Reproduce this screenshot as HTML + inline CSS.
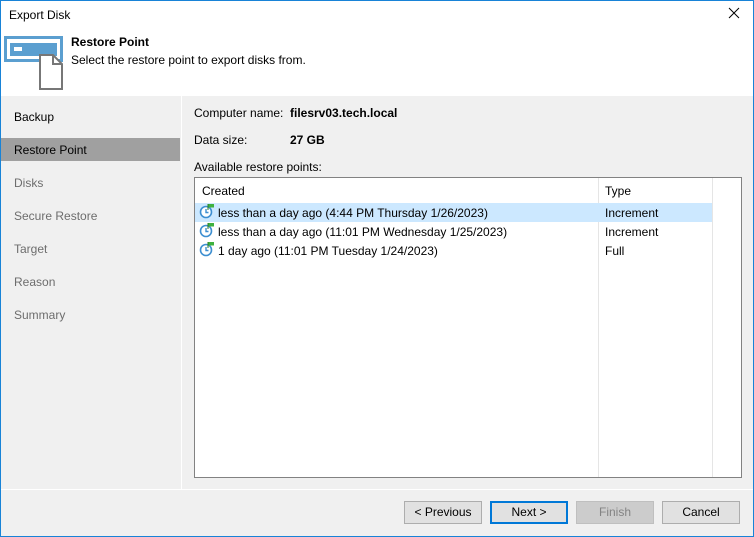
<!DOCTYPE html>
<html><head><meta charset="utf-8"><style>
*{margin:0;padding:0;box-sizing:border-box}
body{width:754px;height:537px;overflow:hidden;font-family:"Liberation Sans",sans-serif;font-size:12px;color:#000;background:#f0f0f0;position:relative}
.abs{position:absolute}
.win{position:absolute;left:0;top:0;width:754px;height:537px;border:1px solid #1883d7;border-top:none}
.nav{color:#6d6d6d;left:14px}
.btn{position:absolute;top:501px;height:23px;border:1px solid #adadad;background:#e1e1e1;text-align:center;line-height:21px}
</style></head><body>
<div class="abs" style="left:0;top:0;width:754px;height:96px;background:#fff"></div>
<div class="abs" style="left:0;top:0;width:754px;height:1px;background:#1883d7"></div>
<div class="abs" style="left:9px;top:8px;font-size:12px">Export Disk</div>
<svg class="abs" style="left:727px;top:6px" width="14" height="14"><path d="M2 2L12 12M12 2L2 12" stroke="#000" stroke-width="1"/></svg>
<svg class="abs" style="left:4px;top:36px" width="60" height="54">
<rect x="1.5" y="1.5" width="56" height="23" fill="none" stroke="#5b9fd0" stroke-width="3"/>
<rect x="6" y="7" width="47" height="13" fill="#5b9fd0"/>
<rect x="10" y="11" width="8" height="4" fill="#fff"/>
<path d="M36 19H49L58 28V53H36Z" fill="#fff" stroke="#777" stroke-width="2"/>
<path d="M49 19V28H58" fill="none" stroke="#777" stroke-width="2"/>
</svg>
<div class="abs" style="left:71px;top:35px;font-weight:bold">Restore Point</div>
<div class="abs" style="left:71px;top:53px">Select the restore point to export disks from.</div>
<div class="abs" style="left:181px;top:96px;width:1px;height:393px;background:#fff"></div>
<div class="abs" style="left:1px;top:138px;width:179px;height:23px;background:#a0a0a0"></div>
<div class="abs" style="left:14px;top:110px">Backup</div>
<div class="abs" style="left:14px;top:143px">Restore Point</div>
<div class="abs nav" style="top:176px">Disks</div>
<div class="abs nav" style="top:209px">Secure Restore</div>
<div class="abs nav" style="top:242px">Target</div>
<div class="abs nav" style="top:275px">Reason</div>
<div class="abs nav" style="top:308px">Summary</div>
<div class="abs" style="left:194px;top:106px">Computer name:</div>
<div class="abs" style="left:290px;top:106px;font-weight:bold">filesrv03.tech.local</div>
<div class="abs" style="left:194px;top:133px">Data size:</div>
<div class="abs" style="left:290px;top:133px;font-weight:bold">27 GB</div>
<div class="abs" style="left:194px;top:160px">Available restore points:</div>
<div class="abs" style="left:194px;top:177px;width:548px;height:301px;background:#fff;border:1px solid #828282"></div>
<div class="abs" style="left:598px;top:178px;width:1px;height:299px;background:#e5e5e5"></div>
<div class="abs" style="left:712px;top:178px;width:1px;height:299px;background:#e5e5e5"></div>
<div class="abs" style="left:202px;top:184px">Created</div>
<div class="abs" style="left:605px;top:184px">Type</div>
<div class="abs" style="left:195px;top:203px;width:517px;height:19px;background:#cce8ff"></div>
<svg width="0" height="0" style="position:absolute"><defs><g id="ic"><circle cx="7" cy="9" r="5.5" fill="#fff" stroke="#3d8fd1" stroke-width="1.6"/><path d="M7 6V9.5H9.5" fill="none" stroke="#3d8fd1" stroke-width="1.4"/><path d="M9 1V7" stroke="#2b7a2b" stroke-width="1"/><path d="M9.5 1H15V4.5H9.5Z" fill="#3fb13f"/></g></defs></svg>
<svg class="abs" style="left:199px;top:203px" width="16" height="17"><use href="#ic"/></svg>
<svg class="abs" style="left:199px;top:222px" width="16" height="17"><use href="#ic"/></svg>
<svg class="abs" style="left:199px;top:241px" width="16" height="17"><use href="#ic"/></svg>
<div class="abs" style="left:218px;top:206px">less than a day ago (4:44 PM Thursday 1/26/2023)</div>
<div class="abs" style="left:605px;top:206px">Increment</div>
<div class="abs" style="left:218px;top:225px">less than a day ago (11:01 PM Wednesday 1/25/2023)</div>
<div class="abs" style="left:605px;top:225px">Increment</div>
<div class="abs" style="left:218px;top:244px">1 day ago (11:01 PM Tuesday 1/24/2023)</div>
<div class="abs" style="left:605px;top:244px">Full</div>
<div class="abs" style="left:1px;top:489px;width:752px;height:1px;background:#fff"></div>
<div class="btn" style="left:404px;width:78px">&lt; Previous</div>
<div class="btn" style="left:490px;width:78px;border:2px solid #0078d7;line-height:19px">Next &gt;</div>
<div class="btn" style="left:576px;width:78px;background:#cccccc;border-color:#bfbfbf;color:#838383">Finish</div>
<div class="btn" style="left:662px;width:78px">Cancel</div>
<div class="win"></div>
</body></html>
